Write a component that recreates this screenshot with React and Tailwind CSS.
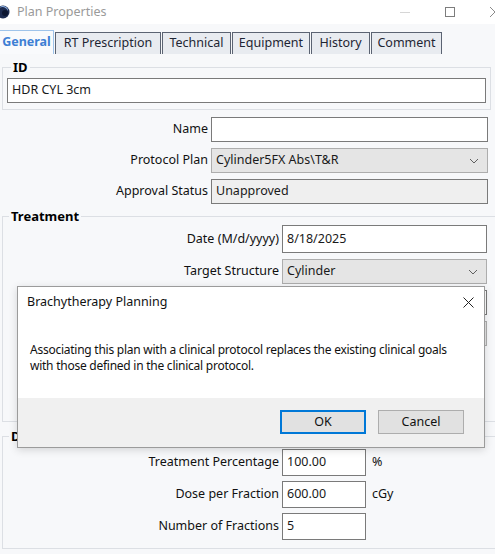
import React from 'react';

const font = { fontFamily: '"Noto Sans", "Open Sans", sans-serif' };

function Chevron() {
  return (
    <svg width="10" height="6" viewBox="0 0 10 6" className="shrink-0">
      <path d="M1 1 L5 5 L9 1" fill="none" stroke="#606060" strokeWidth="1" />
    </svg>
  );
}

function TextBox({ value, w = 'flex-1', h = 'h-[25px]' }) {
  return (
    <div className={`${w} ${h} border border-[#7a7a7a] bg-white flex items-center px-[4px] text-[12.5px] text-[#1a1a1a]`}>
      {value}
    </div>
  );
}

function Combo({ value }) {
  return (
    <div className="flex-1 h-[25px] border border-[#adadad] bg-[#e5e5e5] flex items-center justify-between pl-[4px] pr-[8px] text-[12.5px] text-[#1a1a1a]">
      <span>{value}</span>
      <Chevron />
    </div>
  );
}

function Row({ label, labelW, children, className = '' }) {
  return (
    <div className={`flex items-center ${className}`}>
      <div className={`${labelW} shrink-0 text-right pr-[3px] text-[12.5px] text-[#111]`}>{label}</div>
      {children}
    </div>
  );
}

const tabs = ['RT Prescription', 'Technical', 'Equipment', 'History', 'Comment'];
const tabW = ['w-[106px]', 'w-[69px]', 'w-[78px]', 'w-[59px]', 'w-[71px]'];

export default function App() {
  return (
    <div style={font} className="relative w-[495px] h-[554px] overflow-hidden bg-[#f7f8fa] select-none">
      {/* Title bar */}
      <div className="h-[24px] bg-white flex items-center">
        <svg width="10" height="14" viewBox="0 0 10 14">
          <circle cx="3" cy="7" r="6.5" fill="#1d2b4f" />
          <path d="M-1 3 A6 6 0 0 1 8 6 A5 5 0 0 0 -1 3 Z" fill="#8fb4e6" />
          <circle cx="5" cy="8" r="3" fill="#0d1630" />
        </svg>
        <span className="ml-[7px] text-[12.5px] text-[#9a9a9a]">Plan Properties</span>
        <div className="flex-1" />
        <div className="w-[10px] h-px bg-[#d6d6d6] mr-[35px]" />
        <div className="w-[10px] h-[10px] border border-[#7d7d7d] mr-[35px]" />
        <svg width="10" height="10" viewBox="0 0 10 10" className="-mr-[5px]">
          <path d="M0 0 L10 10 M10 0 L0 10" stroke="#8a8a8a" strokeWidth="1" />
        </svg>
      </div>

      {/* Tabs */}
      <div className="flex items-end h-[30px] pt-[4px]">
        <div className="w-[54px] h-[24px] bg-[#f9fafc] border-t border-r border-[#9ec3ea] flex items-center justify-center text-[12.5px] font-bold text-[#3d7fd4]">
          General
        </div>
        {tabs.map((t, i) => (
          <div
            key={t}
            className={`${tabW[i]} ml-[1px] h-[22px] bg-[#e8ebf0] border-t border-l border-r border-[#5b6372] flex items-center justify-center text-[12.5px] text-[#1e2533]`}
          >
            {t}
          </div>
        ))}
      </div>

      {/* ID group */}
      <fieldset className="mt-[5px] ml-[2px] mr-[4px] border border-[#dcdfe4] px-[4px] pt-[3px] pb-[6px]">
        <legend className="ml-[4px] px-[2px] text-[13px] font-bold text-black leading-[16px]">ID</legend>
        <TextBox value="HDR CYL 3cm" w="w-full" />
      </fieldset>

      {/* General rows */}
      <div className="mt-[7px] pr-[7px] flex flex-col gap-[6px]">
        <Row label="Name" labelW="w-[211px]">
          <TextBox value="" />
        </Row>
        <Row label="Protocol Plan" labelW="w-[211px]">
          <Combo value="Cylinder5FX Abs\T&R" />
        </Row>
        <Row label="Approval Status" labelW="w-[211px]">
          <div className="flex-1 h-[25px] border border-[#7a7a7a] bg-[#efefef] flex items-center px-[4px] text-[12.5px] text-[#1a1a1a]">
            Unapproved
          </div>
        </Row>
      </div>

      {/* Treatment group */}
      <fieldset className="mt-[4px] ml-[2px] h-[214px] border border-[#dcdfe4] -mr-[2px] pr-[9px]">
        <legend className="ml-[6px] px-[2px] text-[13px] font-bold text-black leading-[16px]">Treatment</legend>
        <div className="flex flex-col gap-[6px] pt-[1px]">
          <Row label="Date (M/d/yyyy)" labelW="w-[279px]">
            <TextBox value="8/18/2025" h="h-[28px]" />
          </Row>
          <Row label="Target Structure" labelW="w-[279px]">
            <Combo value="Cylinder" />
          </Row>
          <Row label="Treatment Technique" labelW="w-[279px]">
            <TextBox value="" />
          </Row>
          <Row label="Treatment Type" labelW="w-[279px]">
            <Combo value="" />
          </Row>
        </div>
      </fieldset>

      {/* Dose group */}
      <fieldset className="mt-[6px] ml-[2px] h-[121px] border border-[#dcdfe4] -mr-[2px]">
        <legend className="ml-[6px] px-[2px] text-[13px] font-bold text-black leading-[16px]">Dose</legend>
        <div className="flex flex-col gap-[5px] pt-[5px]">
          <Row label="Treatment Percentage" labelW="w-[279px]">
            <TextBox value="100.00" w="w-[84px]" h="h-[27px]" />
            <span className="ml-[6px] text-[12.5px] text-[#111]">%</span>
          </Row>
          <Row label="Dose per Fraction" labelW="w-[279px]">
            <TextBox value="600.00" w="w-[84px]" h="h-[27px]" />
            <span className="ml-[6px] text-[12.5px] text-[#111]">cGy</span>
          </Row>
          <Row label="Number of Fractions" labelW="w-[279px]">
            <TextBox value="5" w="w-[84px]" h="h-[27px]" />
          </Row>
        </div>
      </fieldset>

      {/* Message dialog */}
      <div className="absolute left-[17px] top-[286px] w-[468px] h-[162px] border border-[#9b9b9b] bg-white shadow-[0_2px_8px_rgba(0,0,0,0.15)] flex flex-col">
        <div className="h-[30px] flex items-center justify-between pl-[9px] pr-[10px]">
          <span className="text-[12.5px] text-[#111]">Brachytherapy Planning</span>
          <svg width="11" height="11" viewBox="0 0 11 11">
            <path d="M0.5 0.5 L10.5 10.5 M10.5 0.5 L0.5 10.5" stroke="#222" strokeWidth="1" />
          </svg>
        </div>
        <div className="flex-1 pl-[12px] pr-[10px] pt-[25px] text-[12px] tracking-[-0.25px] leading-[16px] text-[#111] whitespace-nowrap">
          <div>Associating this plan with a clinical protocol replaces the existing clinical goals</div>
          <div>with those defined in the clinical protocol.</div>
        </div>
        <div className="h-[49px] bg-[#f0f0f0] flex items-start justify-end pt-[12px] pr-[20px] gap-[12px]">
          <div className="w-[86px] h-[24px] border-2 border-[#0078d7] bg-[#e1e1e1] flex items-center justify-center text-[12.5px] text-[#111]">
            OK
          </div>
          <div className="w-[86px] h-[24px] border border-[#adadad] bg-[#e1e1e1] flex items-center justify-center text-[12.5px] text-[#111]">
            Cancel
          </div>
        </div>
      </div>
    </div>
  );
}
